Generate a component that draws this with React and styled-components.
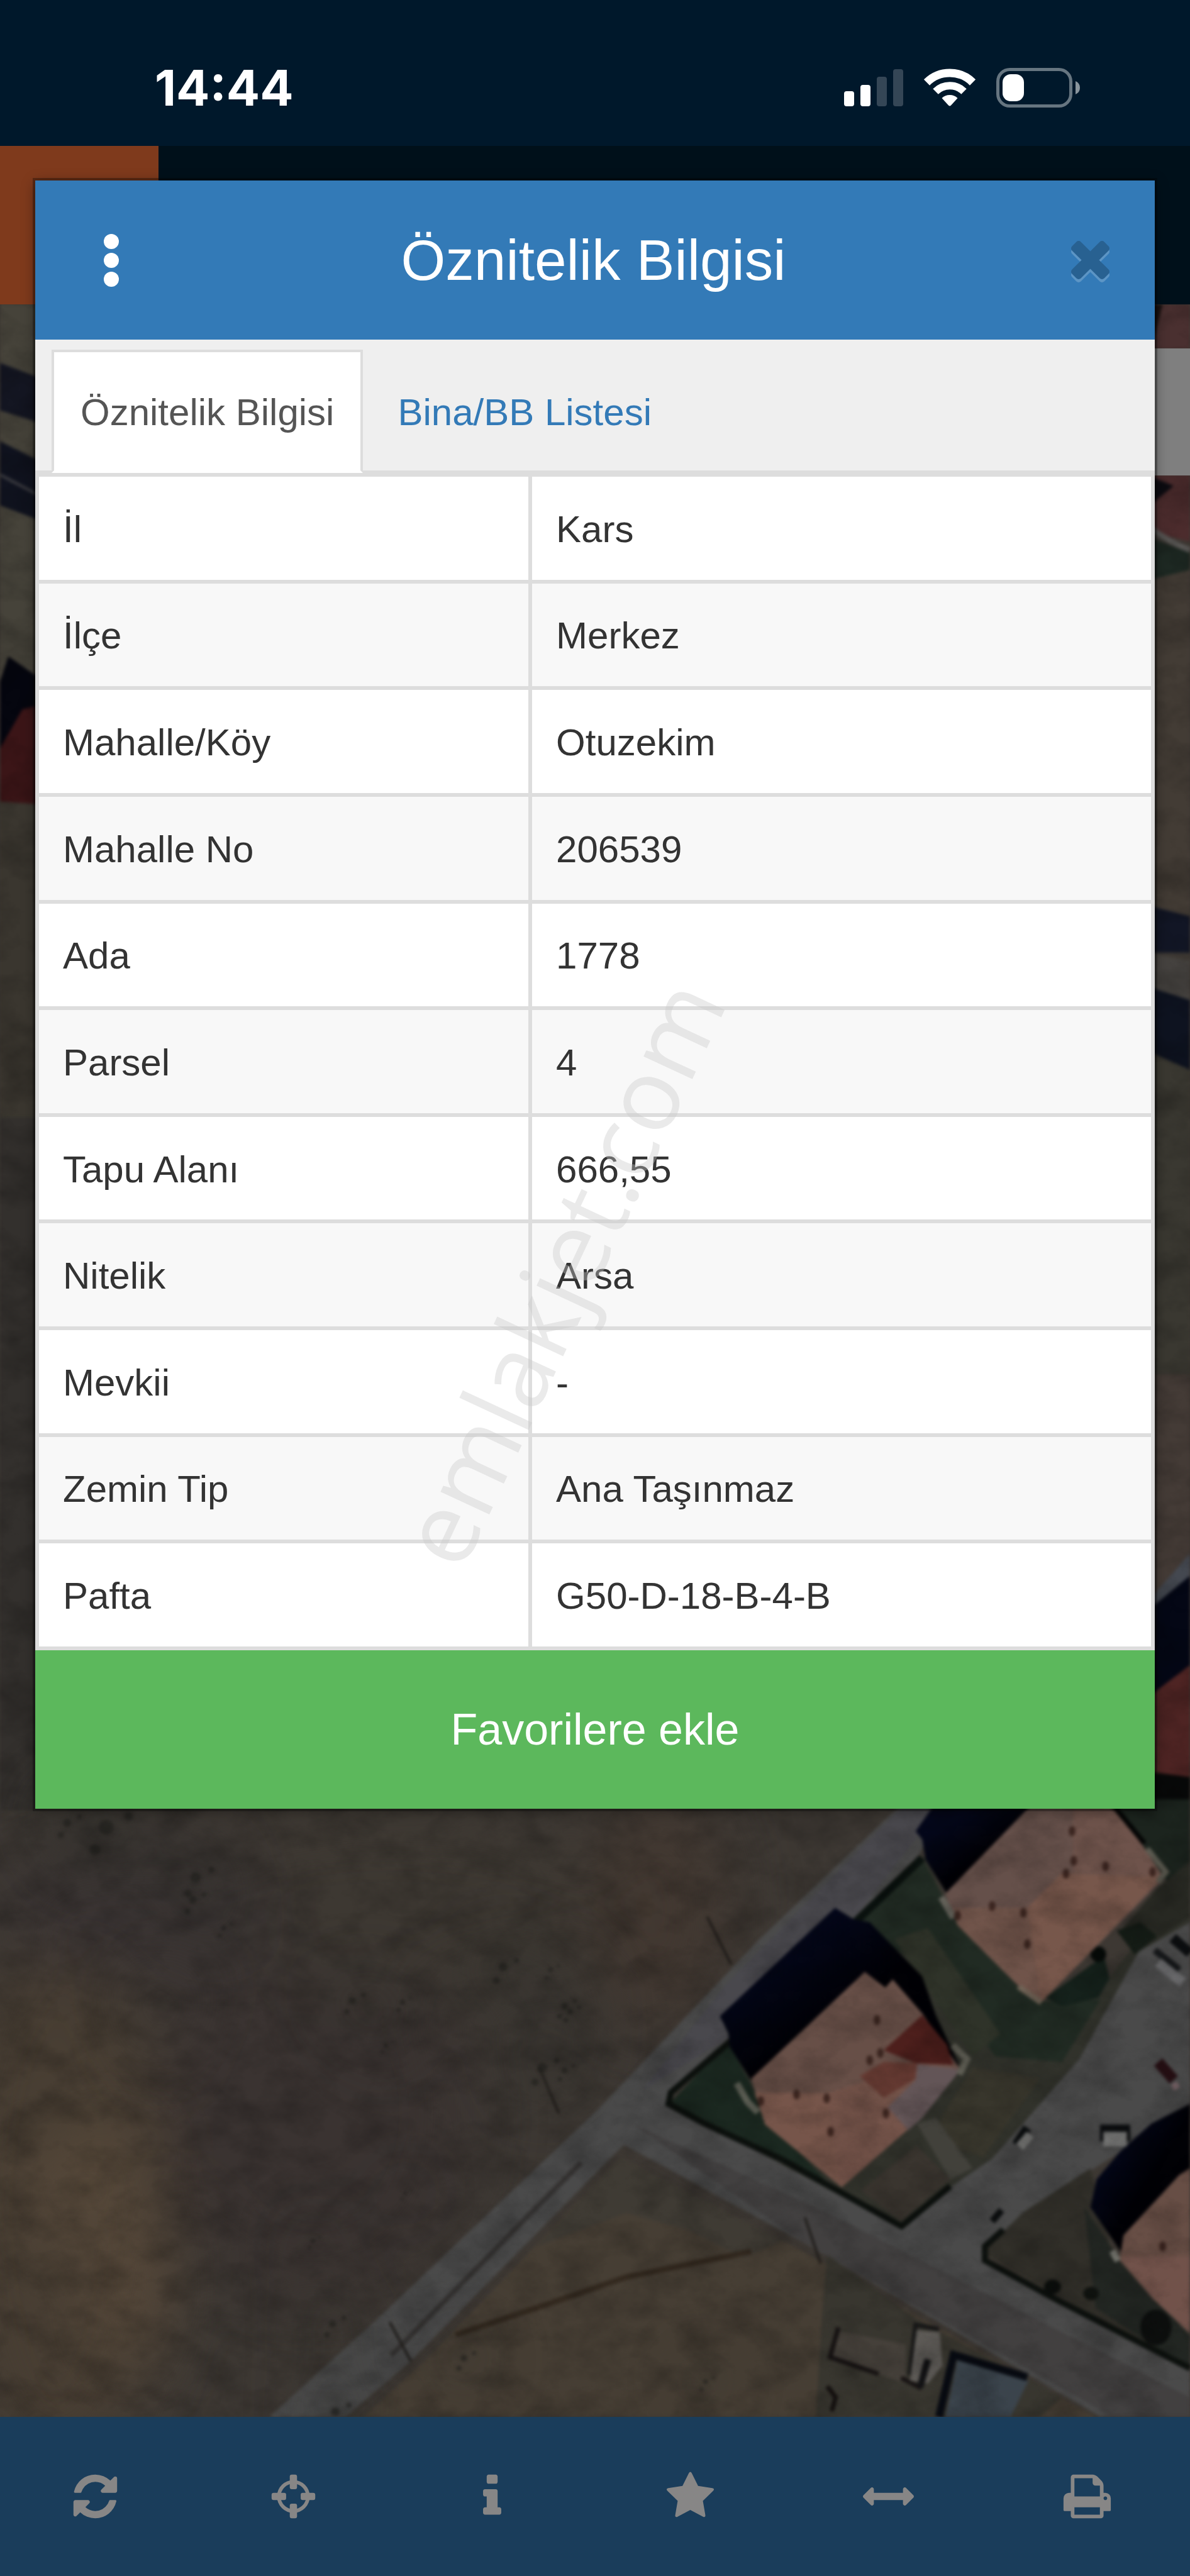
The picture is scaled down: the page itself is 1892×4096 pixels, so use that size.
import { useState } from "react";
import styled, { createGlobalStyle } from "styled-components";

const GlobalStyle = createGlobalStyle`
  * {
    box-sizing: border-box;
  }
  body {
    margin: 0;
    background-color: #00182b;
    font-family: "Liberation Sans", Arial, sans-serif;
  }
  button {
    border: 0;
    padding: 0;
    background: none;
    font-family: inherit;
    cursor: pointer;
  }
`;

const Screen = styled.div`
  position: relative;
  display: flex;
  flex-direction: column;
  min-height: 100vh;
  overflow: hidden;
`;

const StatusBar = styled.header`
  display: flex;
  align-items: center;
  justify-content: space-between;
  height: 232px;
  padding: 46px 175px 0 246px;
  background-color: #00182b;
  color: white;
  > time {
    font-family: Inter, "Liberation Sans", sans-serif;
    font-size: 79px;
    font-weight: 700;
  }
  > div {
    display: flex;
    align-items: center;
    gap: 33px;
  }
`;

const SiteBar = styled.div`
  height: 252px;
  background-color: #00101a;
  > div {
    width: 252px;
    height: 100%;
    background-color: #7f3a1c;
  }
`;

const MapArea = styled.main`
  position: relative;
  flex: 1;
  overflow: hidden;
  background-color: #3a3631;
  > svg {
    position: absolute;
    inset: 0;
    width: 100%;
    height: 100%;
  }
`;

const MapControl = styled.div`
  position: absolute;
  top: 70px;
  right: 0;
  width: 66px;
  height: 202px;
  background-color: #7f7f7f;
`;

const Toolbar = styled.nav`
  display: grid;
  grid-template-columns: repeat(6, 1fr);
  height: 253px;
  background-color: #1a3d5b;
  > button {
    display: flex;
    align-items: center;
    justify-content: center;
    padding-right: 12px;
    color: #878686;
  }
  svg {
    width: 81px;
    height: 81px;
    fill: currentColor;
  }
`;

const Modal = styled.section`
  position: absolute;
  top: 287px;
  left: 56px;
  right: 56px;
  background-color: white;
  box-shadow: 0 0 0 4px rgba(0, 0, 0, 0.3), 0 4px 20px rgba(0, 0, 0, 0.4);
`;

const ModalHeader = styled.div`
  display: grid;
  grid-template-columns: 1fr auto 1fr;
  align-items: center;
  height: 253px;
  padding: 0 72px 0 109px;
  background-color: #337ab7;
  color: white;
  > h1 {
    margin: 0;
    padding-right: 42px;
    font-size: 91px;
    font-weight: 400;
  }
`;

const MenuButton = styled.button`
  display: flex;
  flex-direction: column;
  gap: 6px;
  justify-self: start;
  > span {
    width: 24px;
    height: 24px;
    border-radius: 50%;
    background-color: white;
  }
`;

const CloseButton = styled.button`
  justify-self: end;
  opacity: 0.2;
  > svg {
    display: block;
    width: 61px;
    height: 61px;
    overflow: visible;
    fill: black;
    filter: drop-shadow(0 5px 0 white);
  }
`;

const TabList = styled.div`
  display: flex;
  gap: 9px;
  padding: 16px 26px 0;
  background-color: #efefef;
  border-bottom: 4px solid #ddd;
`;

const Tab = styled.button`
  margin-bottom: -4px;
  border: 4px solid ${(props) => (props.$active ? "#ddd" : "transparent")};
  border-bottom-color: ${(props) => (props.$active ? "white" : "transparent")};
  padding: 51px 42px 48px;
  background-color: ${(props) => (props.$active ? "white" : "transparent")};
  color: ${(props) => (props.$active ? "#555" : "#337ab7")};
  font-size: 60px;
  line-height: 89px;
`;

const AttributeTable = styled.table`
  width: 100%;
  height: 1872px;
  table-layout: fixed;
  border-collapse: collapse;
  color: #333;
  font-size: 60px;
  line-height: 86px;
  th,
  td {
    border: 6px solid #ddd;
    padding: 40px 38px 36px;
    font-weight: 400;
    text-align: left;
  }
  th {
    width: 44.2%;
  }
  tr:nth-child(even) {
    background-color: #f8f8f8;
  }
`;

const FavoriteButton = styled.button`
  display: block;
  width: 100%;
  height: 252px;
  background-color: #5cb85c;
  color: white;
  font-size: 70px;
`;

const Watermark = styled.div`
  position: absolute;
  inset: 0;
  display: grid;
  place-items: center;
  pointer-events: none;
  > span {
    padding-bottom: 124px;
    color: rgba(200, 200, 200, 0.38);
    font-family: "Open Sans", "Noto Sans", sans-serif;
    font-size: 160px;
    transform: rotate(-65deg);
  }
`;

const attributes = [
  ["İl", "Kars"],
  ["İlçe", "Merkez"],
  ["Mahalle/Köy", "Otuzekim"],
  ["Mahalle No", "206539"],
  ["Ada", "1778"],
  ["Parsel", "4"],
  ["Tapu Alanı", "666,55"],
  ["Nitelik", "Arsa"],
  ["Mevkii", "-"],
  ["Zemin Tip", "Ana Taşınmaz"],
  ["Pafta", "G50-D-18-B-4-B"],
];

const tabs = ["Öznitelik Bilgisi", "Bina/BB Listesi"];

const tools = [
  {
    label: "Yenile",
    icon: (
      <path d="M1639 1056q0 5-1 7-64 268-268 434.5t-478 166.5q-146 0-282.5-55t-243.5-157l-129 129q-19 19-45 19t-45-19-19-45v-448q0-26 19-45t45-19h448q26 0 45 19t19 45-19 45l-137 137q71 66 161 102t187 36q134 0 250-65t186-179q11-17 53-117 8-23 30-23h192q13 0 22.5 9.5t9.5 22.5zm25-800v448q0 26-19 45t-45 19h-448q-26 0-45-19t-19-45 19-45l138-138q-148-137-349-137-134 0-250 65t-186 179q-11 17-53 117-8 23-30 23h-199q-13 0-22.5-9.5t-9.5-22.5v-7q65-268 270-434.5t480-166.5q146 0 284 55.5t245 156.5l130-129q19-19 45-19t45 19 19 45z" />
    ),
  },
  {
    label: "Konum",
    icon: (
      <>
        <circle cx="896" cy="896" r="512" fill="none" stroke="currentColor" strokeWidth="128" />
        <rect x="768" y="128" width="256" height="512" rx="72" />
        <rect x="768" y="1152" width="256" height="512" rx="72" />
        <rect x="128" y="768" width="512" height="256" rx="72" />
        <rect x="1152" y="768" width="512" height="256" rx="72" />
      </>
    ),
  },
  {
    label: "Bilgi",
    icon: (
      <path d="M1216 1344v128q0 26-19 45t-45 19h-512q-26 0-45-19t-19-45v-128q0-26 19-45t45-19h64v-384h-64q-26 0-45-19t-19-45v-128q0-26 19-45t45-19h384q26 0 45 19t19 45v576h64q26 0 45 19t19 45zm-128-1152v192q0 26-19 45t-45 19h-256q-26 0-45-19t-19-45v-192q0-26 19-45t45-19h256q26 0 45 19t19 45z" />
    ),
  },
  {
    label: "Favoriler",
    icon: (
      <path d="M1728 647q0 22-26 48l-363 354 86 500q1 7 1 20 0 21-10.5 35.5t-30.5 14.5q-19 0-40-12l-449-236-449 236q-22 12-40 12-21 0-31.5-14.5t-10.5-35.5q0-6 2-20l86-500-364-354q-25-27-25-48 0-37 56-46l502-73 225-455q19-41 49-41t49 41l225 455 502 73q56 9 56 46z" />
    ),
  },
  {
    label: "Ölçüm",
    icon: (
      <path d="M1792 896q0 26-19 45l-256 256q-19 19-45 19t-45-19-19-45v-128h-1024v128q0 26-19 45t-45 19-45-19l-256-256q-19-19-19-45t19-45l256-256q19-19 45-19t45 19 19 45v128h1024v-128q0-26 19-45t45-19 45 19l256 256q19 19 19 45z" />
    ),
  },
  {
    label: "Yazdır",
    icon: (
      <path d="M448 1536h896v-256h-896v256zm0-640h896v-384h-160q-40 0-68-28t-28-68v-160h-640v640zm1152 64q0-26-19-45t-45-19-45 19-19 45 19 45 45 19 45-19 19-45zm128 0v416q0 13-9.5 22.5t-22.5 9.5h-224v160q0 40-28 68t-68 28h-960q-40 0-68-28t-28-68v-160h-224q-13 0-22.5-9.5t-9.5-22.5v-416q0-79 56.5-135.5t135.5-56.5h64v-544q0-40 28-68t68-28h672q40 0 88 20t76 48l152 152q28 28 48 76t20 88v256h64q79 0 135.5 56.5t56.5 135.5z" />
    ),
  },
];

const SignalIcon = () => (
  <svg width="94" height="60" viewBox="0 0 94 60" fill="white">
    <rect x="0" y="36" width="16" height="24" rx="4" />
    <rect x="26" y="26" width="16" height="34" rx="4" />
    <rect x="52" y="13" width="16" height="47" rx="4" fill="#344656" />
    <rect x="78" y="1" width="16" height="59" rx="4" fill="#344656" />
  </svg>
);

const WifiIcon = () => (
  <svg width="82" height="60" viewBox="0 0 82 60" fill="none" stroke="white">
    <path d="M4.500 22 A52 52 0 0 1 77.500 22" strokeWidth="13" />
    <path d="M18.500 36.500 A32 32 0 0 1 63.500 36.500" strokeWidth="12" />
    <path d="M28.500 47 A18 18 0 0 1 53.500 47 L43 58.500 Q41 60.500 39 58.500 Z" fill="white" stroke="none" />
  </svg>
);

const BatteryIcon = () => (
  <svg width="133" height="63" viewBox="0 0 133 63">
    <rect x="2.500" y="2.500" width="116" height="58" rx="19" fill="none" stroke="#667580" strokeWidth="5" />
    <rect x="10" y="10" width="34" height="43" rx="13" fill="white" />
    <path d="M126 21 Q133 24 133 31.500 T126 42 Z" fill="#8a959d" />
  </svg>
);

// chimneys and vents on the apartment roofs
const vents = [
  [1569, 3615], [1575, 3674], [1556, 3687], [1425, 3748], [1479, 3755], [1361, 3760], [1486, 3815],
  [1585, 3782], [1918, 3277], [1921, 3330], [1907, 3353], [1978, 3340], [1775, 3411], [1831, 3423],
  [1713, 3428], [1838, 3479], [2062, 3350], [2080, 4020],
];

// scrub and stones scattered over the empty fields
const shrubs = [
  [190, 3270, 40], [120, 3262, 22], [350, 3360, 28], [345, 3400, 20], [630, 3580, 20], [900, 3520, 24],
  [985, 3525, 14], [1010, 3590, 18], [970, 3700, 26], [1010, 3705, 16], [595, 4158, 20], [725, 3925, 10],
  [560, 4010, 12], [830, 4220, 18], [600, 4316, 24], [1262, 4262, 14], [400, 3450, 14], [720, 3583, 14],
  [690, 3660, 12], [1020, 3600, 16],
];

const SatelliteMap = () => (
  <svg
    viewBox="0 545 2129 3780"
    preserveAspectRatio="xMidYMax slice"
    colorInterpolationFilters="sRGB"
    aria-hidden="true"
  >
    <defs>
      <filter id="soft" x="-5%" y="-5%" width="110%" height="110%">
        <feGaussianBlur stdDeviation="3" />
      </filter>
      <filter id="haze" x="-50%" y="-50%" width="200%" height="200%">
        <feGaussianBlur stdDeviation="60" />
      </filter>
      <filter id="grain" x="0" y="0" width="100%" height="100%">
        <feTurbulence type="fractalNoise" baseFrequency="0.014 0.02" numOctaves="6" seed="8" />
        <feColorMatrix values="0 0 0 0 0  0 0 0 0 0  0 0 0 0 0  0.9 0.9 0 0 -0.72" />
      </filter>
      <linearGradient id="shade" x1="0" y1="0" x2="1" y2="1">
        <stop offset="0.25" stopColor="#04071a" />
        <stop offset="0.55" stopColor="#010105" />
      </linearGradient>
    </defs>
    <rect y="545" width="2129" height="3780" fill="#3d3833" />

    <g filter="url(#haze)">
      <ellipse cx="100" cy="3950" rx="200" ry="480" fill="#483e33" />
      <ellipse cx="560" cy="3780" rx="280" ry="330" fill="#3a3331" />
      <ellipse cx="700" cy="3400" rx="420" ry="160" fill="#3d3832" />
      <ellipse cx="250" cy="3420" rx="260" ry="120" fill="#3a3433" />
      <ellipse cx="1180" cy="3420" rx="120" ry="220" fill="#423831" />
    </g>
    <g filter="url(#haze)" opacity="0.7">
      <ellipse cx="200" cy="3870" rx="60" ry="70" fill="#63523f" />
      <ellipse cx="90" cy="3930" rx="60" ry="80" fill="#5f4f3f" />
      <ellipse cx="230" cy="4050" rx="60" ry="100" fill="#62503f" />
      <ellipse cx="230" cy="4170" rx="60" ry="60" fill="#5f4f3e" />
    </g>

    <g filter="url(#soft)">
      {/* left edge */}
      <polygon points="0,545 80,545 80,1240 0,1340" fill="#46433a" />
      <polygon points="0,650 80,680 80,760 0,735" fill="#141622" />
      <polygon points="0,790 80,830 80,935 0,905" fill="#10131f" />
      <path d="M0 850 L80 892" stroke="#3b3b40" strokeWidth="5" />
      <polygon points="0,1220 15,1175 80,1220 80,1270 0,1345" fill="#05060f" />
      <polygon points="0,1340 40,1270 80,1260 80,1440 0,1435" fill="#3b1517" />
      <polygon points="0,1435 80,1440 80,2000 0,2000" fill="#3a362f" />
      <polygon points="0,2000 80,2000 80,3240 0,3240" fill="#33302d" />

      {/* right edge */}
      <polygon points="2050,545 2129,545 2129,625 2050,625" fill="#4a3030" />
      <polygon points="2050,545 2080,545 2060,625 2050,625" fill="#17100f" />
      <polygon points="2050,850 2129,850 2129,970 2050,950" fill="#4c2c2d" />
      <polygon points="2050,850 2100,870 2050,910" fill="#0d0c12" />
      <path d="M2050 940 Q2090 970 2129 985" stroke="#5c5a58" strokeWidth="10" fill="none" />
      <polygon points="2050,960 2129,990 2129,1040 2050,1045" fill="#1e2923" />
      <polygon points="2050,1040 2129,1020 2129,1640 2050,1620" fill="#433c35" />
      <polygon points="2050,1620 2129,1640 2129,1705 2050,1705" fill="#121625" />
      <polygon points="2050,1705 2129,1720 2129,1790 2050,1765" fill="#45423f" />
      <polygon points="2050,1765 2129,1790 2129,1915 2050,1880" fill="#0e1320" />
      <polygon points="2050,1880 2129,1915 2129,2460 2050,2460" fill="#3a3831" />
      <polygon points="2050,2460 2129,2460 2129,2830 2050,2870" fill="#443b36" />
      <polygon points="2050,2870 2129,2780 2129,2840 2050,2890" fill="#444850" />
      <polygon points="2050,2885 2129,2820 2129,3000 2050,3060" fill="#040715" />
      <polygon points="2050,3040 2129,2980 2129,3180 2050,3180" fill="#4e2423" />
      <polygon points="2050,3170 2129,3180 2129,3260 2050,3260" fill="#080909" />

      {/* roads */}
      <polygon
        points="482,4325 679,4146 1073,3772 1358,3471 1622,3220 1700,3220 1643,3320 1521,3440 1303,3647 1195,3757 1616,3988 1684,3919 1901,3684 2037,3493 2129,3430 2129,3772 1955,3882 1765,4014 1765,4051 2129,4240 2129,4325 1969,4325 1439,4014 1116,3838 733,4227 618,4325"
        fill="#4a4a4a"
      />
      <polygon points="1300,3550 1622,3225 1690,3225 1530,3430 1494,3414 1288,3608 1303,3647 1150,3740" fill="#49484d" />
      <polygon points="1130,3800 1480,3960 2129,4290 2129,4325 1990,4325 1439,4014" fill="#424040" />
      <path d="M1040 3870 L950 3960 L700 4215" stroke="#353332" strokeWidth="9" fill="none" />

      {/* lower field */}
      <polygon points="1110,3860 1439,4030 1960,4325 650,4325 760,4225" fill="#463e34" />
      <polygon points="1110,3860 1400,4010 1330,4040 1230,3990 1120,3960 960,4020" fill="#3f3b34" />
      <path d="M815 4178 L960 4130 L1120 4075 L1344 4029" stroke="#33291f" strokeWidth="10" fill="none" />
      <polygon points="1480,4035 1640,4150 1900,4290 1860,4325 1460,4325 1470,4150" fill="#38362f" />

      {/* gardens */}
      <polygon points="1197,3765 1303,3654 1525,3440 1655,3320 1713,3445 1856,3583 1969,3560 2060,3440 2129,3400 2129,3440 2037,3493 1931,3685 1775,3863 1684,3925 1613,3988" fill="#31322b" />
      <polygon points="1200,3762 1303,3654 1375,3792 1488,3914" fill="#1b2820" />
      <polygon points="1528,3438 1650,3325 1713,3445 1856,3583 1969,3578 1900,3690 1780,3680 1700,3560 1620,3500" fill="#212b23" />
      <polygon points="1600,3470 1660,3450 1790,3640 1740,3680" fill="#2f3329" />
      <polygon points="1660,3830 1740,3700 1860,3720 1760,3860" fill="#38362c" />
      <polygon points="1540,3920 1640,3840 1700,3900 1612,3975" fill="#3a352f" />
      <polygon points="1640,3800 1675,3790 1740,3880 1700,3900" fill="#42413b" />
      <path d="M1310 3650 L1200 3745 L1196 3765 L1260 3800 L1400 3865 L1613 3984 L1700 3912" stroke="#0c100d" strokeWidth="11" fill="none" />
      <path d="M1650 3325 L1530 3440" stroke="#0a110e" strokeWidth="14" />
      <polygon points="1980,3220 2129,3220 2129,3400 2081,3360 2044,3302" fill="#1c241e" />
      <path d="M1981 3225 L2044 3302" stroke="#040505" strokeWidth="18" />
      <polygon points="2070,3380 2129,3330 2129,3430 2040,3490 2000,3460" fill="#272822" />
      <polygon points="1998,3455 2040,3440 2070,3465 2030,3498" fill="#141b15" />
      <polygon points="1870,3575 1975,3500 1985,3540 1965,3575 1900,3590" fill="#15211b" />
      <ellipse cx="1965" cy="3497" rx="14" ry="14" fill="#060a08" />

      {/* first building */}
      <polygon points="1494,3414 1528,3435 1556,3440 1650,3537 1675,3608 1716,3695 1344,3723 1306,3664 1303,3639 1288,3608" fill="url(#shade)" />
      <polygon points="1547,3529 1584,3557 1597,3542 1650,3603 1716,3700 1625,3810 1506,3914 1369,3802 1344,3720" fill="#674f47" />
      <polygon points="1350,3745 1481,3746 1506,3914 1369,3802" fill="#76554a" />
      <polygon points="1481,3746 1538,3728 1640,3690 1716,3702 1625,3810 1506,3914" fill="#75544a" />
      <polygon points="1650,3606 1694,3659 1706,3695 1638,3692 1581,3669" fill="#4d1f1c" />
      <polygon points="1538,3715 1581,3690 1641,3692 1638,3720 1581,3754" fill="#653a32" />
      <polygon points="1641,3694 1719,3703 1650,3790 1625,3812 1588,3771 1638,3722" fill="#635557" />
      <path d="M1704 3660 L1730 3685 L1716 3712" stroke="#605f55" strokeWidth="12" fill="none" />
      <path d="M1318 3728 L1338 3762 L1356 3780" stroke="#5d5f55" strokeWidth="12" fill="none" />

      {/* second building */}
      <polygon points="1678,3220 1870,3220 1694,3389 1656,3328 1650,3292 1638,3277" fill="url(#shade)" />
      <polygon points="1850,3225 1981,3225 2044,3302 2081,3363 1863,3583 1825,3557 1713,3445 1691,3389" fill="#65504a" />
      <polygon points="1920,3225 1981,3225 2044,3302 2081,3358 1920,3350" fill="#6e534b" />
      <polygon points="1706,3414 1838,3414 1863,3583 1825,3557 1713,3445" fill="#70544a" />
      <polygon points="1838,3414 1900,3352 2081,3358 1863,3583" fill="#77574b" />
      <path d="M2052 3308 L2086 3350 L2072 3368" stroke="#5b5a50" strokeWidth="10" fill="none" />
      <path d="M1684 3395 L1706 3432" stroke="#64625a" strokeWidth="12" />
      <path d="M1822 3555 L1863 3584" stroke="#706356" strokeWidth="10" />

      {/* third building */}
      <polygon points="1755,4030 1792,3997 1829,3960 1951,3880 1993,4047 2129,4190 2129,4243" fill="#312f29" />
      <polygon points="1940,3950 2000,4040 2129,4180 2129,4240 1960,4130" fill="#222622" />
      <path d="M1795 3990 L1762 4020 L1762 4045 L1890 4115 L2129 4238" stroke="#0d110e" strokeWidth="11" fill="none" />
      <ellipse cx="1883" cy="4092" rx="15" ry="13" fill="#0c0f0d" />
      <ellipse cx="1952" cy="4104" rx="14" ry="12" fill="#0f120f" />
      <ellipse cx="2068" cy="4165" rx="28" ry="32" fill="#0d0f0e" />
      <polygon points="2129,3765 2060,3800 2004,3850 1962,3900 1951,3950 2009,4035 2129,3920" fill="url(#shade)" />
      <polygon points="2110,3892 2129,3880 2129,4175 2062,4113 2003,4045 2010,4000" fill="#674e45" />
      <polygon points="2003,4038 2129,4038 2129,4175 2062,4113" fill="#71524a" />
      <path d="M1990 4028 L2000 4046" stroke="#76766f" strokeWidth="12" />

      {/* sheds by the road */}
      <polygon points="1503,4172 1620,4195 1620,4265 1487,4220" fill="#45403a" />
      <path d="M1500 4165 L1485 4218 L1572 4248 M1612 4255 L1645 4272 L1660 4228" stroke="#171313" strokeWidth="8" fill="none" />
      <path d="M1628 4250 L1638 4160 L1680 4168" stroke="#171717" strokeWidth="8" fill="none" />
      <polygon points="1640,4170 1681,4173 1686,4233 1660,4265 1628,4260" fill="#5f5c58" />
      <path d="M1660 4222 L1646 4272" stroke="#121214" strokeWidth="12" />
      <polygon points="1713,4223 1840,4260 1808,4325 1692,4325" fill="#3b444c" />
      <path d="M1680 4325 L1706 4214 L1838 4254" stroke="#080b12" strokeWidth="14" fill="none" />
      <path d="M1480 4270 L1495 4290 L1488 4315" stroke="#14100f" strokeWidth="8" fill="none" />

      {/* cars */}
      <path d="M1818 3838 L1838 3808" stroke="#0a0d0e" strokeWidth="16" />
      <path d="M1824 3842 L1843 3820" stroke="#7d7d7b" strokeWidth="16" />
      <rect x="1968" y="3802" width="54" height="30" fill="#0c0e10" />
      <rect x="1974" y="3815" width="42" height="26" fill="#7a7a79" />
      <path d="M2066 3490 L2110 3525" stroke="#16181a" strokeWidth="12" />
      <path d="M2072 3512 L2116 3548" stroke="#69696b" strokeWidth="18" />
      <path d="M2098 3468 L2129 3495" stroke="#0c0e10" strokeWidth="18" />
      <path d="M2072 3690 L2100 3722" stroke="#250f13" strokeWidth="20" />
      <path d="M2100 3728 L2106 3738" stroke="#756064" strokeWidth="12" />
      <path d="M1775 3975 L1792 3955" stroke="#0c0e0f" strokeWidth="12" />

      {/* poles */}
      <path d="M1265 3430 L1308 3515 M697 4155 L735 4225 M965 3700 L1000 3782 M1440 3968 L1468 4050" stroke="#1d1a17" strokeWidth="4" fill="none" />
      {vents.map(([x, y]) => (
        <ellipse key={`${x}-${y}`} cx={x} cy={y} rx="6" ry="9" fill="#2f1a15" opacity="0.8" />
      ))}
    </g>

    <g filter="url(#haze)" opacity="0.6">
      {shrubs.map(([x, y, r]) => (
        <circle key={`${x}-${y}`} cx={x} cy={y} r={r * 2} fill="#2e2d29" />
      ))}
    </g>
    <g filter="url(#soft)" fill="#1f1e1c">
      {shrubs.map(([x, y, r]) => (
        <g key={`${x}-${y}`} opacity="0.6">
          <circle cx={x} cy={y} r={r / 3} />
          <circle cx={x + r} cy={y - r / 2} r={r / 5} />
          <circle cx={x - r / 2} cy={y + r} r={r / 4} />
        </g>
      ))}
    </g>
    <rect y="545" width="2129" height="3780" filter="url(#grain)" opacity="0.3" />
  </svg>
);

const App = () => {
  const [activeTab, setActiveTab] = useState(0);

  return (
    <Screen>
      <GlobalStyle />
      <StatusBar>
        <time>14:44</time>
        <div>
          <SignalIcon />
          <WifiIcon />
          <BatteryIcon />
        </div>
      </StatusBar>
      <SiteBar>
        <div></div>
      </SiteBar>
      <MapArea>
        <SatelliteMap />
        <MapControl />
      </MapArea>
      <Toolbar>
        {tools.map((tool) => (
          <button key={tool.label} aria-label={tool.label}>
            <svg viewBox="0 0 1792 1792">{tool.icon}</svg>
          </button>
        ))}
      </Toolbar>
      <Modal role="dialog" aria-labelledby="modal-title">
        <ModalHeader>
          <MenuButton aria-label="Menü">
            <span></span>
            <span></span>
            <span></span>
          </MenuButton>
          <h1 id="modal-title">Öznitelik Bilgisi</h1>
          <CloseButton aria-label="Kapat">
            <svg viewBox="302 366 1188 1188">
              <path d="M1490 1322q0 40-28 68l-136 136q-28 28-68 28t-68-28l-294-294-294 294q-28 28-68 28t-68-28l-136-136q-28-28-28-68t28-68l294-294-294-294q-28-28-28-68t28-68l136-136q28-28 68-28t68 28l294 294 294-294q28-28 68-28t68 28l136 136q28 28 28 68t-28 68l-294 294 294 294q28 28 28 68z" />
            </svg>
          </CloseButton>
        </ModalHeader>
        <TabList role="tablist">
          {tabs.map((tab, index) => (
            <Tab
              key={tab}
              role="tab"
              aria-selected={index === activeTab}
              $active={index === activeTab}
              onClick={() => setActiveTab(index)}
            >
              {tab}
            </Tab>
          ))}
        </TabList>
        <AttributeTable>
          <tbody>
            {attributes.map(([name, value]) => (
              <tr key={name}>
                <th scope="row">{name}</th>
                <td>{value}</td>
              </tr>
            ))}
          </tbody>
        </AttributeTable>
        <FavoriteButton>Favorilere ekle</FavoriteButton>
      </Modal>
      <Watermark>
        <span>emlakjet.com</span>
      </Watermark>
    </Screen>
  );
};

export default App;
